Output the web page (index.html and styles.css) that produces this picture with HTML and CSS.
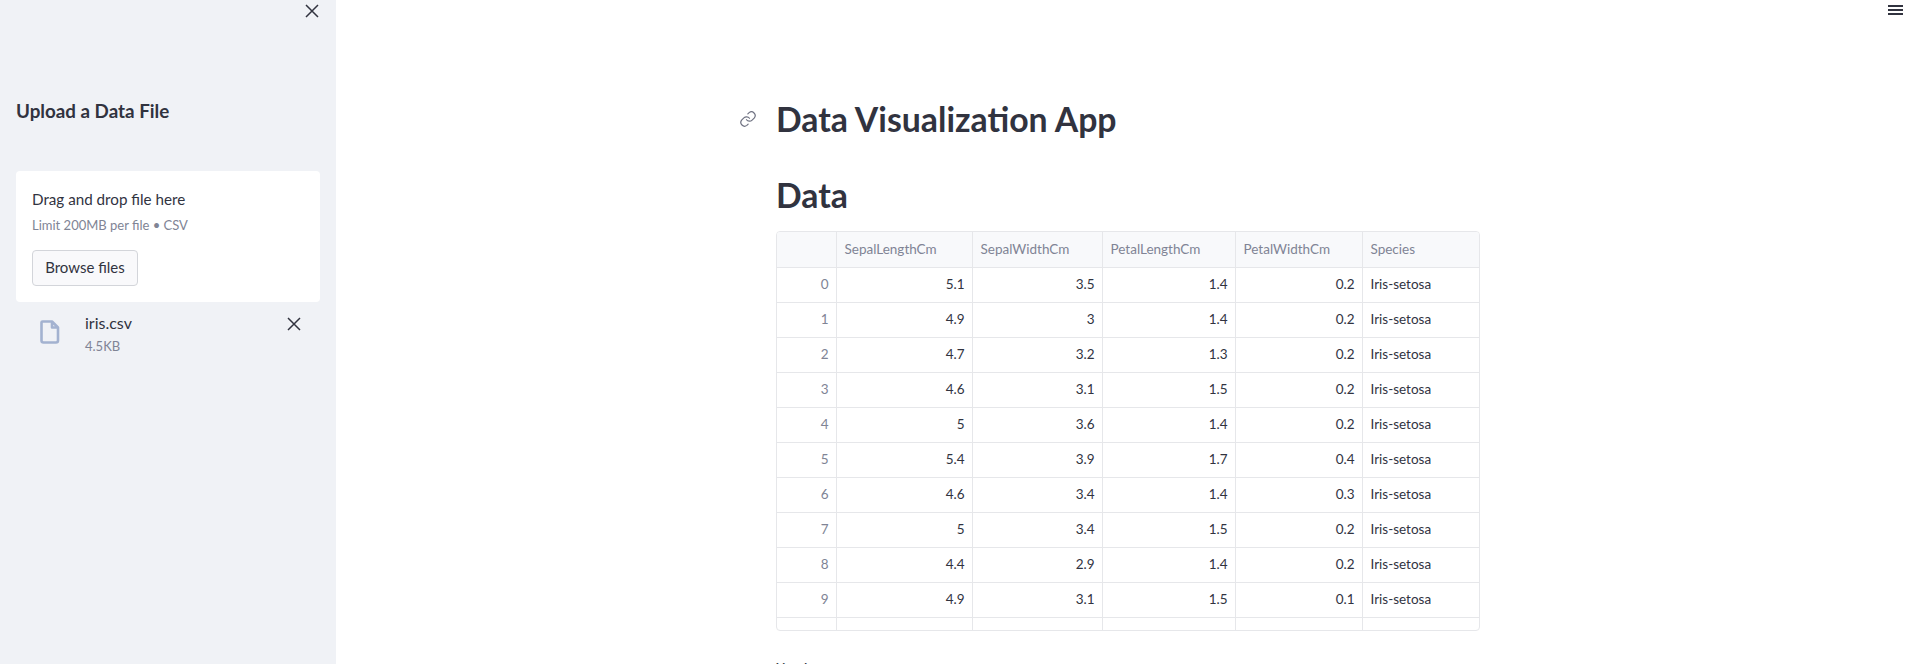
FILE: index.html
```html
<!DOCTYPE html>
<html lang="en">
<head>
    <meta charset="UTF-8">
    <title>Data Visualization App</title>
    <link rel="stylesheet" href="styles.css">
</head>
<body>
    <div class="app">
        <aside class="sidebar">
            <div class="sidebar-top">
                <svg class="close-icon" viewBox="0 0 14 14"><path d="M1 1 13 13M13 1 1 13"/></svg>
            </div>
            <h3>Upload a Data File</h3>
            <div class="dropzone">
                <div class="drop-title">Drag and drop file here</div>
                <div class="drop-limit">Limit 200MB per file • CSV</div>
                <button class="browse">Browse files</button>
            </div>
            <div class="file-row">
                <svg class="file-icon" viewBox="0 0 20 24"><path d="M2.5 1.5H12L18 7.5V20.5Q18 22.5 16 22.5H3.5Q1.5 22.5 1.5 20.5V2.5Q1.5 1.5 2.5 1.5ZM12 1.5V7.5H18"/></svg>
                <div class="file-info">
                    <div class="file-name">iris.csv</div>
                    <div class="file-size">4.5KB</div>
                </div>
                <svg class="close-icon" viewBox="0 0 14 14"><path d="M1 1 13 13M13 1 1 13"/></svg>
            </div>
        </aside>
        <main class="main">
            <div class="menu-bar">
                <div class="menu-icon"><span></span><span></span><span></span></div>
            </div>
            <div class="content">
                <h1>
                    <svg class="link-icon" viewBox="0 0 24 24"><path d="M10 13a5 5 0 0 0 7.5.5l3-3a5 5 0 0 0-7-7l-1.7 1.7"/><path d="M14 11a5 5 0 0 0-7.5-.5l-3 3a5 5 0 0 0 7 7l1.7-1.7"/></svg>
                    Data Visualization App
                </h1>
                <h2>Data</h2>
                <div class="table-wrap">
                    <table>
                        <colgroup>
                            <col class="c-index"><col class="c-sl"><col class="c-sw"><col class="c-pl"><col class="c-pw"><col class="c-sp">
                        </colgroup>
                        <thead>
                            <tr><th></th><th>SepalLengthCm</th><th>SepalWidthCm</th><th>PetalLengthCm</th><th>PetalWidthCm</th><th>Species</th></tr>
                        </thead>
                        <tbody>
                            <tr><td class="idx">0</td><td>5.1</td><td>3.5</td><td>1.4</td><td>0.2</td><td class="txt">Iris-setosa</td></tr>
                            <tr><td class="idx">1</td><td>4.9</td><td>3</td><td>1.4</td><td>0.2</td><td class="txt">Iris-setosa</td></tr>
                            <tr><td class="idx">2</td><td>4.7</td><td>3.2</td><td>1.3</td><td>0.2</td><td class="txt">Iris-setosa</td></tr>
                            <tr><td class="idx">3</td><td>4.6</td><td>3.1</td><td>1.5</td><td>0.2</td><td class="txt">Iris-setosa</td></tr>
                            <tr><td class="idx">4</td><td>5</td><td>3.6</td><td>1.4</td><td>0.2</td><td class="txt">Iris-setosa</td></tr>
                            <tr><td class="idx">5</td><td>5.4</td><td>3.9</td><td>1.7</td><td>0.4</td><td class="txt">Iris-setosa</td></tr>
                            <tr><td class="idx">6</td><td>4.6</td><td>3.4</td><td>1.4</td><td>0.3</td><td class="txt">Iris-setosa</td></tr>
                            <tr><td class="idx">7</td><td>5</td><td>3.4</td><td>1.5</td><td>0.2</td><td class="txt">Iris-setosa</td></tr>
                            <tr><td class="idx">8</td><td>4.4</td><td>2.9</td><td>1.4</td><td>0.2</td><td class="txt">Iris-setosa</td></tr>
                            <tr><td class="idx">9</td><td>4.9</td><td>3.1</td><td>1.5</td><td>0.1</td><td class="txt">Iris-setosa</td></tr>
                            <tr class="clipped-row"><td class="idx">10</td><td>5.4</td><td>3.7</td><td>1.5</td><td>0.2</td><td class="txt">Iris-setosa</td></tr>
                        </tbody>
                    </table>
                </div>
                <div class="after-table">X-axis</div>
            </div>
        </main>
    </div>
</body>
</html>
```

FILE: styles.css
```css
html, body {
    margin: 0;
    padding: 0;
    height: 664px;
    overflow: hidden;
}
body {
    font-family: "Lato", "Noto Sans", sans-serif;
    color: #31333f;
    background-color: #ffffff;
}
.app {
    display: flex;
    height: 664px;
}
.sidebar {
    width: 336px;
    flex: none;
    box-sizing: border-box;
    padding: 0 16px;
    background-color: #f0f2f6;
}
.sidebar-top {
    display: flex;
    justify-content: flex-end;
    height: 24px;
    padding-top: 4px;
    margin-right: 1px;
}
.close-icon {
    width: 14px;
    height: 14px;
    flex: none;
    fill: none;
    stroke: #31333f;
    stroke-width: 1.5;
}
.sidebar h3 {
    margin: 68px 0 0;
    font-size: 18.8px;
    line-height: 30px;
    font-weight: 700;
}
.dropzone {
    margin-top: 45px;
    height: 131px;
    box-sizing: border-box;
    padding: 16px 16px 0;
    background-color: #ffffff;
    border-radius: 4px;
}
.drop-title {
    font-size: 15.2px;
    line-height: 24px;
}
.drop-limit {
    margin-top: 4px;
    font-size: 13px;
    line-height: 20px;
    color: #808495;
}
.browse {
    display: block;
    margin-top: 15px;
    width: 106px;
    height: 36px;
    padding: 0 0 2px;
    font: inherit;
    font-size: 15px;
    color: #31333f;
    background-color: #f9f9fb;
    border: 1px solid #d3d5da;
    border-radius: 4px;
}
.file-row {
    display: flex;
    align-items: flex-start;
    padding: 9px 0 0 24px;
}
.file-icon {
    width: 20px;
    height: 24px;
    margin-top: 9px;
    flex: none;
    fill: none;
    stroke: #a3b2d0;
    stroke-width: 2.6;
    stroke-linejoin: round;
}
.file-info {
    flex: 1;
    margin-left: 25px;
}
.file-name {
    font-size: 16px;
    line-height: 24px;
}
.file-size {
    margin-top: 1px;
    font-size: 13px;
    line-height: 20px;
    color: #808495;
}
.file-row .close-icon {
    margin: 6px 19px 0 0;
}
.main {
    flex: 1;
    min-width: 0;
}
.menu-bar {
    display: flex;
    justify-content: flex-end;
    height: 20px;
    padding: 5px 12px 0 0;
}
.menu-icon {
    width: 15px;
}
.menu-icon span {
    display: block;
    height: 2px;
    margin-bottom: 2px;
    background-color: #31333f;
}
.content {
    width: 704px;
    margin-left: 440px;
}
h1 {
    position: relative;
    margin: 0;
    padding-top: 69px;
    font-size: 33.8px;
    line-height: 50px;
    font-weight: 700;
}
.link-icon {
    position: absolute;
    left: -37px;
    top: 85px;
    width: 18px;
    height: 18px;
    fill: none;
    stroke: #6f7282;
    stroke-width: 1.6;
    stroke-linecap: round;
}
h2 {
    margin: 0;
    padding-top: 26px;
    font-size: 33.8px;
    line-height: 50px;
    font-weight: 700;
}
.table-wrap {
    margin-top: 11px;
    height: 400px;
    box-sizing: border-box;
    overflow: hidden;
    border: 1px solid #e6e7ea;
    border-radius: 4px;
}
table {
    width: 703px;
    border-collapse: collapse;
    table-layout: fixed;
    font-size: 13.5px;
}
.c-index { width: 59px; }
.c-sl { width: 136px; }
.c-sw { width: 130px; }
.c-pl { width: 133px; }
.c-pw { width: 127px; }
.c-sp { width: 118px; }
th, td {
    height: 35px;
    box-sizing: border-box;
    padding: 0 7px 2px 8px;
    border: 1px solid #e6e7ea;
    font-weight: 400;
    white-space: nowrap;
}
th {
    padding-bottom: 0;
    text-align: left;
    color: #808495;
    background-color: #f8f9fb;
}
tr > :first-child {
    border-left: none;
}
tr > :last-child {
    border-right: none;
}
thead tr:first-child th {
    border-top: none;
}
td {
    text-align: right;
}
td.idx {
    color: #808495;
}
td.txt {
    text-align: left;
}
.clipped-row td {
    padding-top: 4px;
    padding-bottom: 0;
}
.after-table {
    margin-top: 27px;
    font-size: 14px;
    line-height: 20px;
}
```
